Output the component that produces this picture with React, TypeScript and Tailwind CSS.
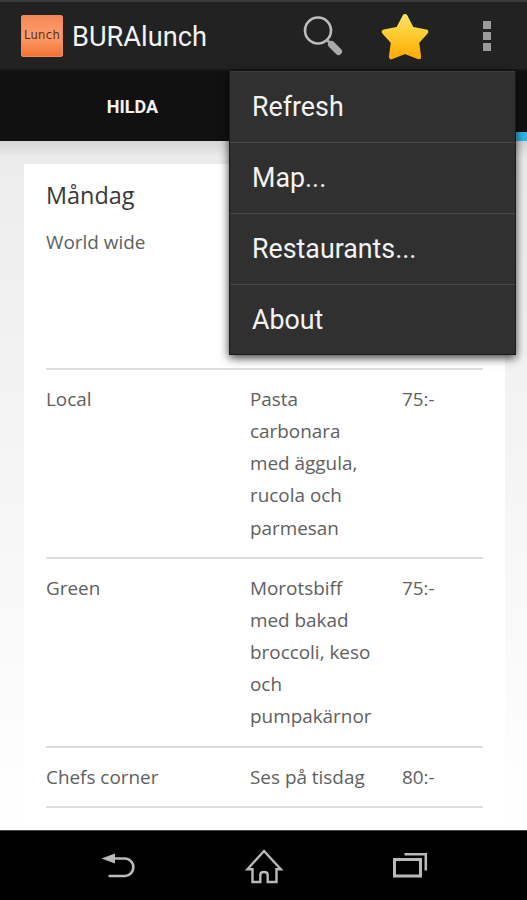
const dishes = [
  { name: "World wide", lines: ["", "", "", ""], price: "" },
  { name: "Local", lines: ["Pasta", "carbonara", "med äggula,", "rucola och", "parmesan"], price: "75:-" },
  { name: "Green", lines: ["Morotsbiff", "med bakad", "broccoli, keso", "och", "pumpakärnor"], price: "75:-" },
  { name: "Chefs corner", lines: ["Ses på tisdag"], price: "80:-" },
];

const menuItems = ["Refresh", "Map...", "Restaurants...", "About"];

function SearchIcon() {
  return (
    <svg width="44" height="44" viewBox="0 0 44 44" fill="none">
      <circle cx="16" cy="15.5" r="13" stroke="#bdbdbd" strokeWidth="2.6" />
      <path d="M25 25l3.5 3.5" stroke="#aaa" strokeWidth="3" />
      <path d="M29.5 29.5l7 7" stroke="#aaa" strokeWidth="7" strokeLinecap="round" />
    </svg>
  );
}

function StarIcon() {
  return (
    <svg width="50" height="50" viewBox="0 0 50 50">
      <defs>
        <linearGradient id="star" x1="0" y1="0" x2="0" y2="1">
          <stop offset="0" stopColor="#ffe45f" />
          <stop offset="0.5" stopColor="#fdc82b" />
          <stop offset="1" stopColor="#ffad08" />
        </linearGradient>
      </defs>
      <path
        d="M25 4.5L31.8 17.3L45.8 19.9L36.6 30.1L38.6 44.8L25 39.4L11.4 44.8L13.4 30.1L4.2 19.9L18.2 17.3Z"
        fill="url(#star)"
        stroke="url(#star)"
        strokeWidth="5"
        strokeLinejoin="round"
      />
    </svg>
  );
}

function Header() {
  return (
    <header className="flex h-[71px] shrink-0 items-center border-t-2 border-b-2 border-t-[#393939] border-b-[#171717] bg-[#222] pt-[2px] pl-[21px]">
      <div className="mr-[9px] mb-[2px] flex h-[42px] w-[42px] shrink-0 items-center justify-center rounded-[2px] border border-[#ee8a5b] bg-linear-to-b from-[#f58a57] via-[#fd9d6b] to-[#f47332] font-['DejaVu_Sans','Liberation_Sans',sans-serif] text-[11.6px] tracking-[0.3px] text-[#5c2c18]">
        Lunch
      </div>
      <h1 className="w-[230px] pt-[3px] text-[27.2px] leading-none text-[#f3f3f3]">BURAlunch</h1>
      <div className="flex w-[44px]">
        <SearchIcon />
      </div>
      <div className="ml-[34px] flex">
        <StarIcon />
      </div>
      <div className="ml-[53px] flex flex-col gap-[3px] pb-[2px]">
        <span className="h-2 w-2 bg-[#9b9b9b]" />
        <span className="h-2 w-2 bg-[#9b9b9b]" />
        <span className="h-2 w-2 bg-[#9b9b9b]" />
      </div>
    </header>
  );
}

function OverflowMenu() {
  return (
    <ul className="absolute top-[71px] left-[229px] w-[287px] border-x border-b border-[#1b1b1b] bg-[#303030] shadow-[0_3px_9px_rgba(0,0,0,0.75)]">
      {menuItems.map((item) => (
        <li
          key={item}
          className="flex h-[71px] items-center border-t border-[#474747] pl-[22px] text-[26.8px] text-[#f3f3f3] first:border-[#3b3b3b] last:h-[70px] last:pt-[2px]"
        >
          {item}
        </li>
      ))}
    </ul>
  );
}

function NavigationBar() {
  return (
    <nav className="flex h-[70px] shrink-0 items-center border-t border-[#444] bg-black pl-[101px]">
      <svg width="36" height="36" viewBox="0 0 36 36" fill="none" stroke="#bababa" strokeWidth="2.7">
        <path d="M12 10.5H24.5A8.8 8.8 0 0 1 24.5 28H7.5" />
        <path d="M0.5 10.5L14 5.5V15.5Z" fill="#bababa" stroke="none" />
      </svg>
      <svg className="ml-[107px]" width="40" height="40" viewBox="0 0 40 40" fill="none" stroke="#bababa" strokeWidth="2.4">
        <path d="M20 5L3.5 23.2H8.5V36H16.3V29Q16.3 26 20 26Q23.7 26 23.7 29V36H32.5V23.2H36.8Z" />
      </svg>
      <svg className="ml-[107px]" width="38" height="36" viewBox="0 0 38 36" fill="none" stroke="#bababa" strokeWidth="3">
        <path d="M3.5 11.5H29.5V28H3.5Z" />
        <path d="M13.5 6.3H34.8V22.5" strokeWidth="2.6" />
      </svg>
    </nav>
  );
}

export default function App() {
  return (
    <div className="relative flex h-[900px] w-[527px] flex-col overflow-hidden bg-white font-['Roboto',sans-serif]">
      <Header />
      <div className="flex h-[70px] shrink-0 bg-[#111]">
        <div className="flex w-[265px] items-center justify-center text-[18px] font-bold text-[#f3f3f3]">
          HILDA
        </div>
        <div className="flex-1 border-b-[9px] border-[#33b5e5]" />
      </div>
      <main className="flex h-[689px] shrink-0 flex-col bg-linear-to-b from-[#ececec] to-[#fff] font-['Open_Sans',sans-serif]">
        <div className="h-[23px] shrink-0 bg-linear-to-b from-[#d5d5d5] to-[#ececec] to-70%" />
        <section className="ml-6 h-[666px] w-[481px] bg-white px-[22px]">
          <h2 className="h-[49px] pt-[11px] text-[23.4px] leading-[40px] font-normal text-[#383838]">Måndag</h2>
          {dishes.map((dish) => (
            <div
              key={dish.name}
              className="flex w-[437px] border-b-2 border-[#dedede] py-[13px] text-[18.9px] leading-[32.2px] font-normal text-[#606060]"
            >
              <div className="w-[204px]">{dish.name}</div>
              <div className="w-[152px]">
                {dish.lines.map((line, i) => (
                  <div key={i} className="h-[32.2px] whitespace-nowrap">
                    {line}
                  </div>
                ))}
              </div>
              <div>{dish.price}</div>
            </div>
          ))}
        </section>
      </main>
      <NavigationBar />
      <OverflowMenu />
    </div>
  );
}
